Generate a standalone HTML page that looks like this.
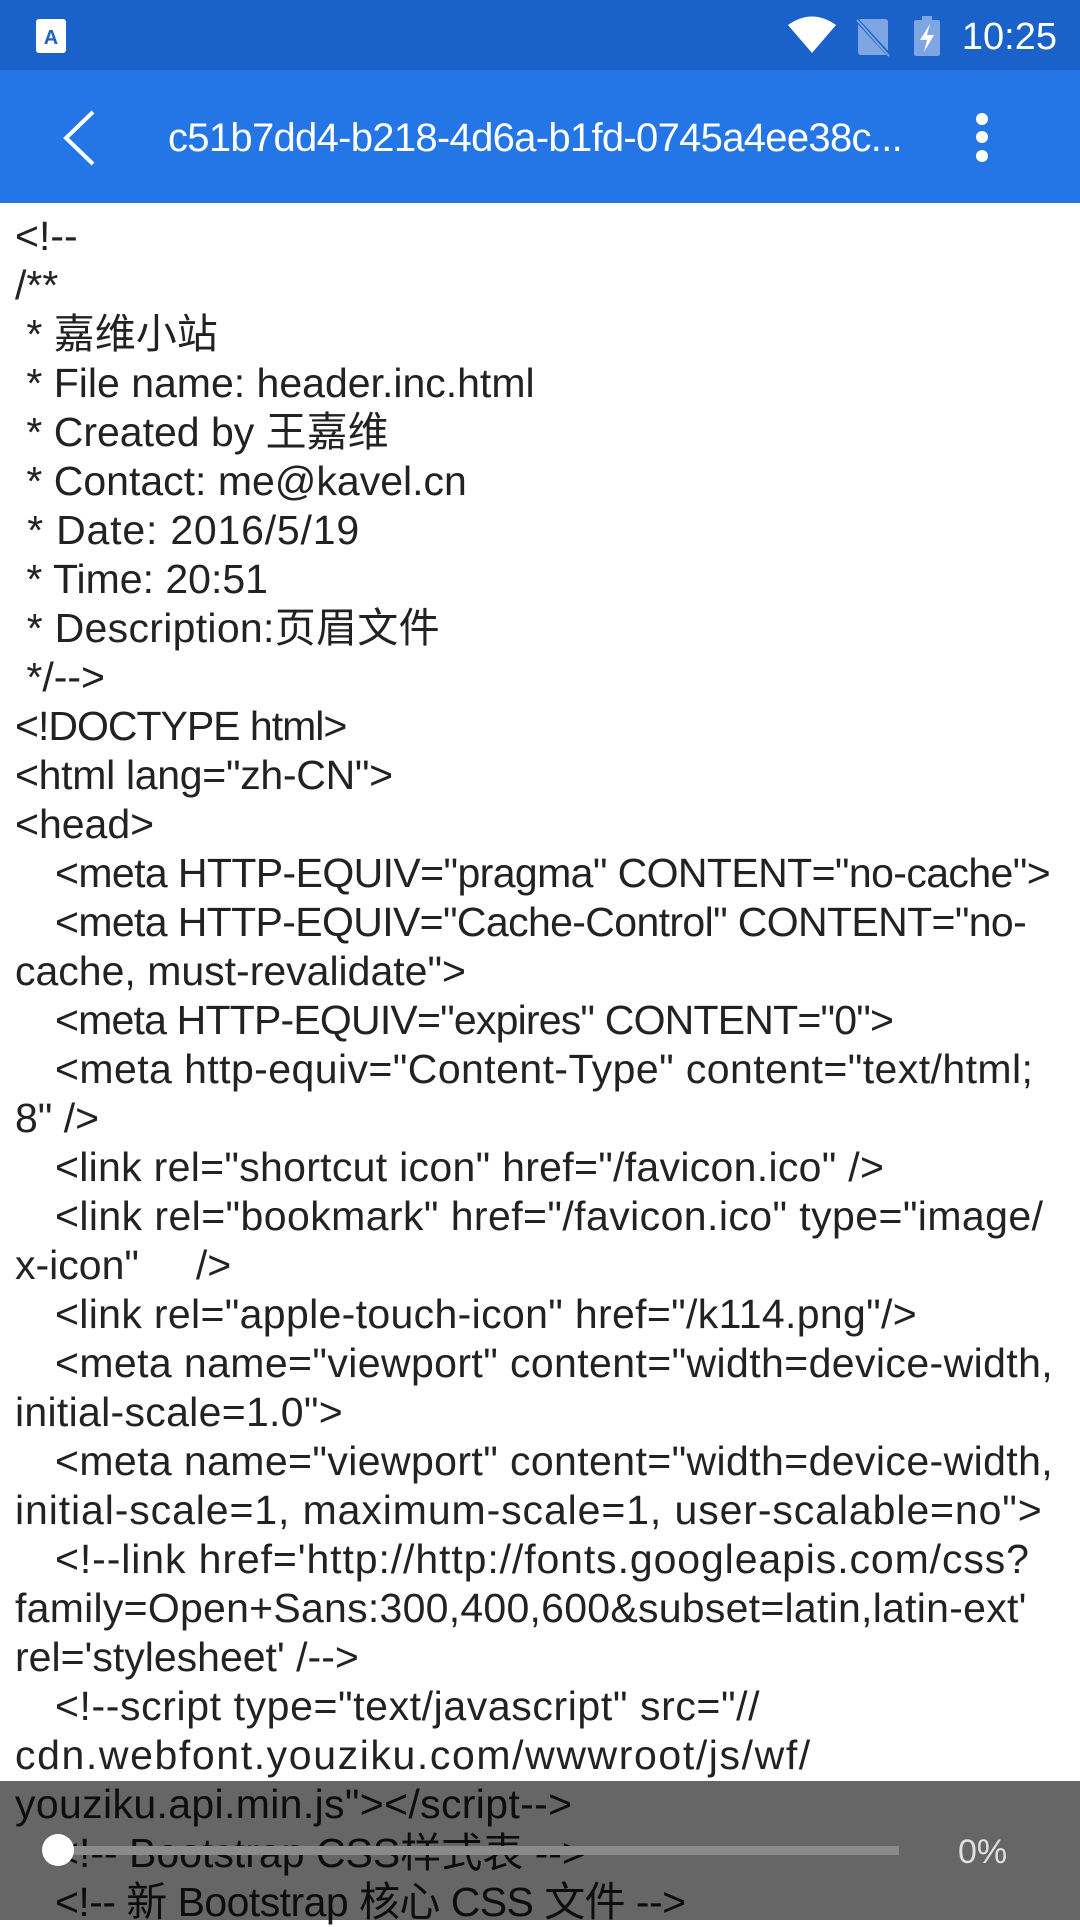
<!DOCTYPE html>
<html><head><meta charset="utf-8"><style>
*{margin:0;padding:0;box-sizing:border-box}
body{width:1080px;height:1920px;overflow:hidden;background:#fff;position:relative;font-family:"Liberation Sans","Noto Sans CJK SC",sans-serif}
#sb{position:absolute;top:0;left:0;width:1080px;height:70px;background:#1a62c9}
#ab{position:absolute;top:70px;left:0;width:1080px;height:133px;background:#2476e6}
#title{position:absolute;left:168px;top:114px;font-size:40px;color:#fff;letter-spacing:-0.7px;white-space:nowrap;line-height:48px}
#txt{position:absolute;top:212px;left:15px;width:1065px;font-size:41px;line-height:49px;color:#222;white-space:pre;letter-spacing:0;overflow:hidden}
.i{padding-left:40px}
#ov{position:absolute;top:1781px;left:0;width:1080px;height:139px;background:rgba(0,0,0,0.6)}
</style></head><body>
<div id="sb">
<svg width="1080" height="70" style="position:absolute;left:0;top:0">
<rect x="36" y="19" width="30" height="34" rx="3" fill="#fff"/>
<text x="51" y="44" font-size="20" font-weight="bold" fill="#1a62c9" text-anchor="middle" font-family="Liberation Sans">A</text>
<path d="M788 25 Q812 8 836 25 L812 53 Z" fill="#fff"/>
<rect x="858" y="19" width="30" height="36" rx="3" fill="#7ea6e2"/>
<line x1="855" y1="18" x2="890" y2="56" stroke="#1a62c9" stroke-width="4"/>
<line x1="857" y1="20" x2="889" y2="56" stroke="#7ea6e2" stroke-width="2"/>
<rect x="914" y="20" width="26" height="36" rx="2" fill="#7ea6e2"/>
<rect x="922" y="16" width="10" height="5" fill="#7ea6e2"/>
<path d="M930 24 L920 40 L927 40 L924 52 L934 35 L927 35 Z" fill="#fff"/>
<text x="1057" y="49" font-size="38" fill="#fff" text-anchor="end" font-family="Liberation Sans">10:25</text>
</svg>
</div>
<div id="ab">
<svg width="1080" height="133" style="position:absolute;left:0;top:0">
<polyline points="93,42 66,68 93,94" fill="none" stroke="#fff" stroke-width="4"/>
<circle cx="982" cy="49" r="6" fill="#fff"/>
<circle cx="982" cy="67" r="6" fill="#fff"/>
<circle cx="982" cy="86" r="6" fill="#fff"/>
</svg>
</div>
<div id="title">c51b7dd4-b218-4d6a-b1fd-0745a4ee38c...</div>
<div id="txt"><div>&lt;!--</div><div>/**</div><div> * 嘉维小站</div><div> * File name: header.inc.html</div><div> * Created by 王嘉维</div><div> * Contact: me@kavel.cn</div><div style="letter-spacing:0.8px"> * Date: 2016/5/19</div><div> * Time: 20:51</div><div style="letter-spacing:0.3px"> * Description:页眉文件</div><div> */--&gt;</div><div style="letter-spacing:-1px">&lt;!DOCTYPE html&gt;</div><div style="letter-spacing:-0.3px">&lt;html lang="zh-CN"&gt;</div><div>&lt;head&gt;</div><div class="i" style="letter-spacing:-0.6px">&lt;meta HTTP-EQUIV="pragma" CONTENT="no-cache"&gt;</div><div class="i" style="letter-spacing:-0.63px">&lt;meta HTTP-EQUIV="Cache-Control" CONTENT="no-</div><div>cache, must-revalidate"&gt;</div><div class="i" style="letter-spacing:-0.8px">&lt;meta HTTP-EQUIV="expires" CONTENT="0"&gt;</div><div class="i" style="letter-spacing:0.43px">&lt;meta http-equiv="Content-Type" content="text/html;</div><div>8" /&gt;</div><div class="i" style="letter-spacing:0.3px">&lt;link rel="shortcut icon" href="/favicon.ico" /&gt;</div><div class="i" style="letter-spacing:0.42px">&lt;link rel="bookmark" href="/favicon.ico" type="image/</div><div>x-icon"     /&gt;</div><div class="i" style="letter-spacing:0.34px">&lt;link rel="apple-touch-icon" href="/k114.png"/&gt;</div><div class="i" style="letter-spacing:0.4px">&lt;meta name="viewport" content="width=device-width,</div><div style="letter-spacing:0.3px">initial-scale=1.0"&gt;</div><div class="i" style="letter-spacing:0.4px">&lt;meta name="viewport" content="width=device-width,</div><div style="letter-spacing:0.9px">initial-scale=1, maximum-scale=1, user-scalable=no"&gt;</div><div class="i" style="letter-spacing:0.9px">&lt;!--link href='http://http://fonts.googleapis.com/css?</div><div style="letter-spacing:0.26px">family=Open+Sans:300,400,600&amp;subset=latin,latin-ext'</div><div>rel='stylesheet' /--&gt;</div><div class="i" style="letter-spacing:0.6px">&lt;!--script type="text/javascript" src="//</div><div style="letter-spacing:1.6px">cdn.webfont.youziku.com/wwwroot/js/wf/</div><div style="letter-spacing:0.35px">youziku.api.min.js"&gt;&lt;/script--&gt;</div><div class="i">&lt;!-- Bootstrap CSS样式表 --&gt;</div><div class="i" style="letter-spacing:-0.55px">&lt;!-- 新 Bootstrap 核心 CSS 文件 --&gt;</div></div>
<div id="ov">
<svg width="1080" height="139" style="position:absolute;left:0;top:0">
<rect x="58" y="65" width="841" height="9" fill="#8a8a8a"/>
<circle cx="58" cy="69" r="16" fill="#fff"/>
<text x="958" y="82" font-size="34" fill="#e0e0e0" font-family="Liberation Sans">0%</text>
</svg>
</div>
</body></html>
